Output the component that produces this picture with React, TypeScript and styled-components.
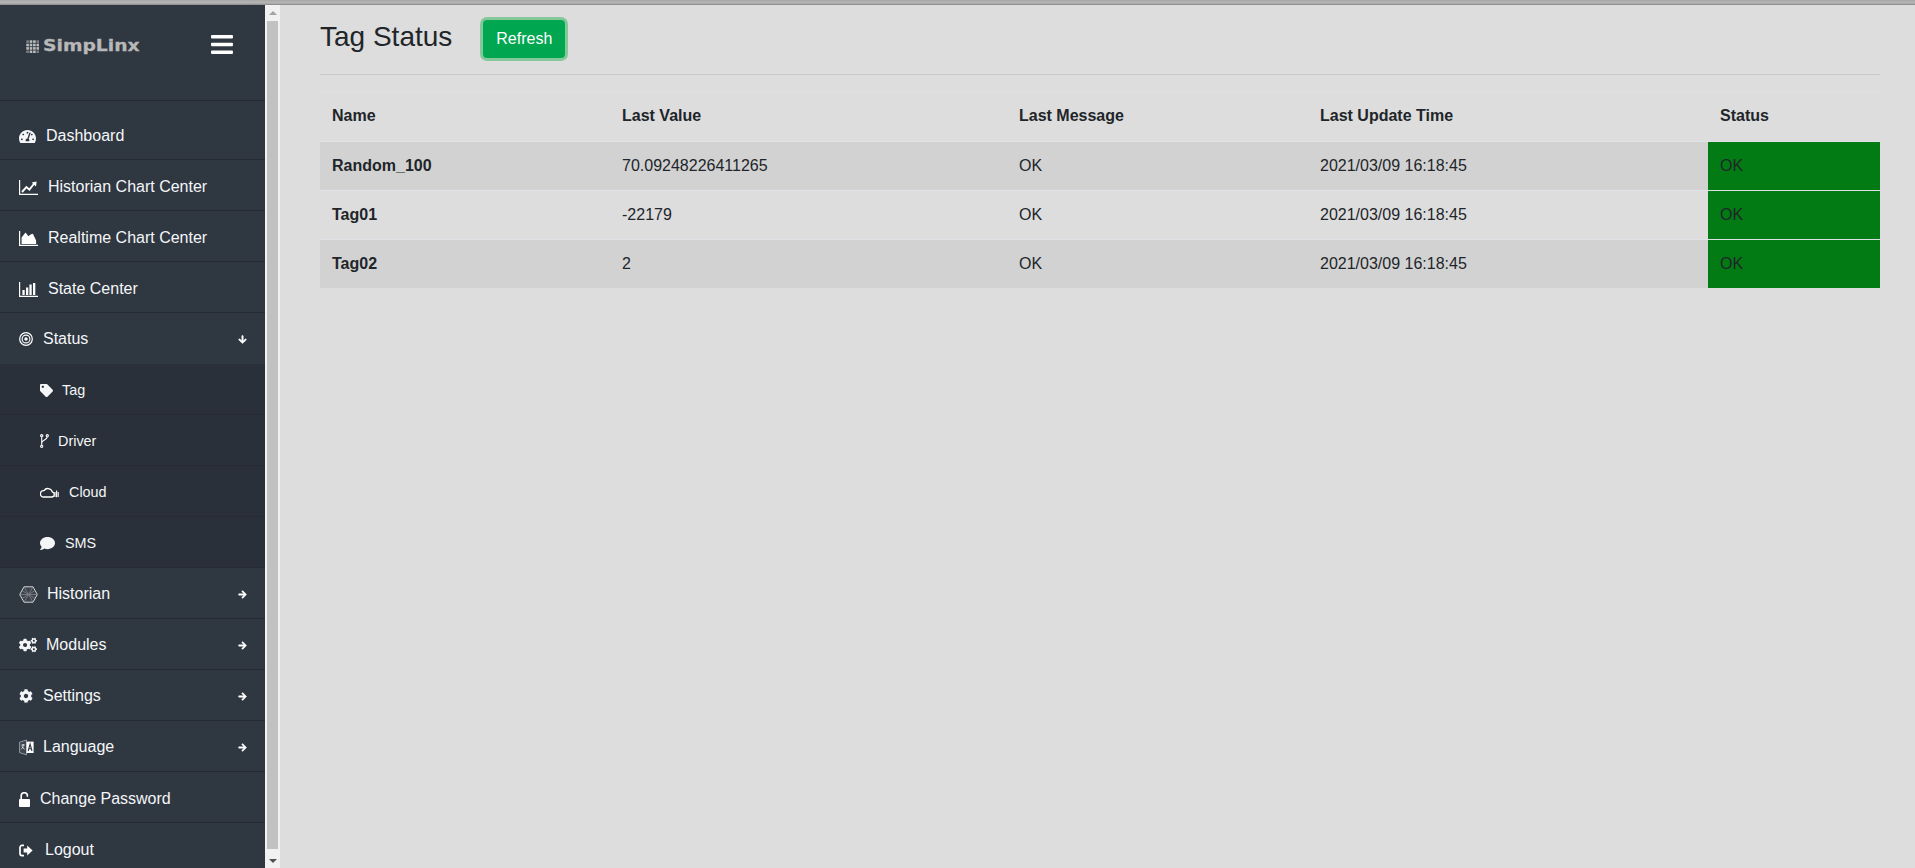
import React from "react";
import styled, { createGlobalStyle } from "styled-components";
import { FaTachometerAlt, FaTag, FaComment, FaCogs, FaCog, FaArrowRight, FaArrowDown, FaBars } from "react-icons/fa";

const Global = createGlobalStyle`
  html, body { margin: 0; height: 100%; overflow: hidden; background: #ddd; }
  body { font-family: "Liberation Sans", Arial, sans-serif; font-size: 16px; color: #212529; }
  #root { height: 100%; }
`;

const Page = styled.div`display: flex; flex-direction: column; height: 868px; width: 1915px;`;
const TopStrip = styled.div`height: 5px; flex: none; background: linear-gradient(#a6a6a6, #b6b6b6 45%, #a8a8a8 75%, #828282);`;
const Body = styled.div`display: flex; flex: 1; min-height: 0;`;
const Sidebar = styled.aside`width: 265px; flex: none; background: #2f3741; overflow: hidden; color: #fff;`;
const ScrollBar = styled.div`
  width: 15px; flex: none; background: #f1f1f1; display: flex; flex-direction: column; align-items: center; box-sizing: border-box;
`;
const ScrollButton = styled.div`height: 15px; flex: none; display: flex; align-items: center; justify-content: center;`;
const ScrollThumb = styled.div`flex: 1; width: 11px; background: #c1c1c1; margin: 1px 0 4px;`;
const TriUp = styled.div`width: 0; height: 0; border: 4px solid transparent; border-top: 0; border-bottom: 4px solid #a3a3a3;`;
const TriDown = styled.div`width: 0; height: 0; border: 4px solid transparent; border-bottom: 0; border-top: 4px solid #505050;`;

const Brand = styled.div`
  height: 96px; border-bottom: 1px solid #262b31; box-sizing: border-box; display: flex; align-items: flex-start;
  justify-content: space-between; padding: 31px 32px 0 26px; margin-bottom: 8px;
`;
const Logo = styled.div`display: flex; align-items: center; gap: 4px; height: 18px; margin-top: 1px;`;
const LogoText = styled.span`
  font-family: "DejaVu Sans", sans-serif; font-weight: 700; font-size: 16px; color: #b8b8b8; line-height: 18px;
  display: inline-block; transform: scaleX(1.17); transform-origin: left center; -webkit-text-stroke: 0.3px #b8b8b8;
`;
const Burger = styled(FaBars)`width: 22px; height: 25px; color: #fff; margin-top: -4px;`;
const Row = styled.div<{ $sub?: boolean; $open?: boolean; $drop: number }>`
  height: 51px; box-sizing: border-box; display: flex; align-items: center; font-size: ${(p) => (p.$sub ? "14.4px" : "16px")};
  padding: ${(p) => p.$drop}px 18px 0 ${(p) => (p.$sub ? "40px" : "19px")}; color: #f4f6f8;
  border-bottom: 1px solid ${(p) => (p.$sub ? "#272c33" : p.$open ? "transparent" : "#262b31")};
  background: ${(p) => (p.$sub ? "#2a3039" : "#2f3741")};
`;
const IconSlot = styled.span<{ $w: number }>`
  display: inline-flex; align-items: center; flex: none; width: ${(p) => p.$w}px; svg { display: block; }
`;
const Label = styled.span`flex: 1; white-space: nowrap;`;
const Arrow = styled.span`display: inline-flex; color: #fff; svg { width: 9px; height: 9px; display: block; stroke: currentColor; stroke-width: 30; }`;

const Dots = () => (
  <svg width="13" height="13" viewBox="0 0 13 13" aria-hidden="true">
    {[0, 1, 2, 3].flatMap((r) =>
      [0, 1, 2, 3].map((c) => {
        const corner = (r === 0 || r === 3) && (c === 0 || c === 3);
        return <rect key={`${r}-${c}`} x={c * 3.4 + 0.3} y={r * 3.4 + 0.3} width="2.6" height="2.6" fill={corner ? "#7c8084" : "#bcbcbc"} />;
      })
    )}
  </svg>
);

const HexIcon = () => (
  <svg width="19" height="17" viewBox="0 0 19 17" fill="none" stroke="#d4d7da" strokeWidth="1" aria-hidden="true">
    <path d="M5 .8h9l4.3 7.7L14 16.2H5L.7 8.5z" fill="#3d444d" />
    <path d="M5 .8l9 15.4M14 .8L5 16.2M.7 8.5h17.6M3 4.5l13 8M16 4.5l-13 8" stroke="#80848a" strokeWidth="0.8" />
  </svg>
);
const Axis = () => <path d="M.6 0v14.4H19" fill="none" stroke="#fff" strokeWidth="1.2" />;
const LineChartIcon = () => (
  <svg width="19" height="15" viewBox="0 0 19 15" aria-hidden="true">
    <Axis />
    <path d="M3 12l4.4-5 3 2.6 4.4-5.6" fill="none" stroke="#fff" strokeWidth="1.9" />
    <path d="M12.6 2.4l5-1-.6 5z" fill="#fff" />
  </svg>
);
const AreaChartIcon = () => (
  <svg width="19" height="15" viewBox="0 0 19 15" aria-hidden="true">
    <Axis />
    <path d="M2.6 13V6.5L6.5 1.5l3 3.7 2-1.8 2.4-.6 3.2 6.7V13z" fill="#fff" />
  </svg>
);
const BarChartIcon = () => (
  <svg width="19" height="15" viewBox="0 0 19 15" aria-hidden="true">
    <Axis />
    <path d="M3.4 8h2.3v5H3.4zM7 5.5h2.3V13H7zM10.4 2.6h2.3V13h-2.3zM14 1h2.3v12H14z" fill="#fff" />
  </svg>
);
const TargetIcon = () => (
  <svg width="14" height="14" viewBox="0 0 14 14" fill="none" stroke="#fff" aria-hidden="true">
    <circle cx="7" cy="7" r="6.3" strokeWidth="1.2" />
    <circle cx="7" cy="7" r="3.9" strokeWidth="1.1" />
    <circle cx="7" cy="7" r="1.7" fill="#fff" stroke="none" />
  </svg>
);
const ForkIcon = () => (
  <svg width="9" height="14" viewBox="0 0 9 14" fill="none" stroke="#fff" strokeWidth="1.1" aria-hidden="true">
    <circle cx="1.7" cy="1.7" r="1.1" />
    <circle cx="1.7" cy="12.3" r="1.1" />
    <circle cx="7.3" cy="1.7" r="1.1" />
    <path d="M1.7 2.8v8.4M7.3 2.8C7.3 6 1.7 6 1.7 9" />
  </svg>
);
const CloudIcon = () => (
  <svg width="19" height="12" viewBox="0 0 19 12" fill="none" stroke="#fff" strokeWidth="1.3" aria-hidden="true">
    <path d="M3.2 11h8.8a2.6 2.6 0 00.3-5.1A4.6 4.6 0 004 4.6 3.2 3.2 0 003.2 11z" />
    <path d="M15 6v5M16.6 4.6v6.6M18.2 6v5" strokeWidth="1.1" />
  </svg>
);
const LanguageIcon = () => (
  <svg width="15" height="17" viewBox="0 0 15 17" aria-hidden="true">
    <path d="M.6 3.2L7.5 1v14.8L.6 13.6z" fill="#3c4650" stroke="#aab4be" strokeWidth="0.8" />
    <path d="M7.5 2.6H14.6V14H7.5z" fill="#fff" />
    <path d="M9.2 12l1.9-7 1.9 7M10 9.8h2.2" fill="none" stroke="#2f3741" strokeWidth="1.1" />
    <path d="M2.4 6h3.4M4.1 5v1c0 2-.8 3.5-1.7 4M3.2 7.5c.5 1.2 1.3 2.2 2.4 2.7" fill="none" stroke="#fff" strokeWidth="0.8" />
  </svg>
);
const UnlockIcon = () => (
  <svg width="11" height="15" viewBox="0 0 11 15" aria-hidden="true">
    <rect x="0" y="7" width="11" height="8" rx="0.8" fill="#fff" />
    <path d="M2.2 7.5V3.8a3.1 3.1 0 016.2 0v.9" fill="none" stroke="#fff" strokeWidth="1.6" />
  </svg>
);
const LogoutIcon = () => (
  <svg width="14" height="13" viewBox="0 0 14 13" aria-hidden="true">
    <path d="M5 1.4H3A2 2 0 001 3.4v6.2a2 2 0 002 2h2" fill="none" stroke="#fff" strokeWidth="1.7" />
    <path d="M4.6 4.6h3.6V1.4l5.4 5.1-5.4 5.1V8.4H4.6z" fill="#fff" />
  </svg>
);

type Item = { label: string; icon: React.ReactNode; w: number; sub?: boolean; arrow?: "r" | "d" };
const items: Item[] = [
  { label: "Dashboard", icon: <FaTachometerAlt size={17} />, w: 27 },
  { label: "Historian Chart Center", icon: <LineChartIcon />, w: 29 },
  { label: "Realtime Chart Center", icon: <AreaChartIcon />, w: 29 },
  { label: "State Center", icon: <BarChartIcon />, w: 29 },
  { label: "Status", icon: <TargetIcon />, w: 24, arrow: "d" },
  { label: "Tag", icon: <FaTag size={13} />, w: 22, sub: true },
  { label: "Driver", icon: <ForkIcon />, w: 18, sub: true },
  { label: "Cloud", icon: <CloudIcon />, w: 29, sub: true },
  { label: "SMS", icon: <FaComment size={15} />, w: 25, sub: true },
  { label: "Historian", icon: <HexIcon />, w: 28, arrow: "r" },
  { label: "Modules", icon: <FaCogs size={18} />, w: 27, arrow: "r" },
  { label: "Settings", icon: <FaCog size={14} />, w: 24, arrow: "r" },
  { label: "Language", icon: <LanguageIcon />, w: 24, arrow: "r" },
  { label: "Change Password", icon: <UnlockIcon />, w: 21 },
  { label: "Logout", icon: <LogoutIcon />, w: 26 },
];

const Main = styled.main`flex: 1; min-width: 0; padding: 0 35px 0 40px; background: #ddd;`;
const Head = styled.div`
  display: flex; align-items: center; height: 70px; box-sizing: border-box; border-bottom: 1px solid #c8c8c8; padding-bottom: 4px;
  margin-bottom: 16px;
`;
const Title = styled.h1`font-size: 28px; font-weight: 400; margin: 0 30px 2px 0; line-height: 1.2; color: #212529;`;
const RefreshButton = styled.button`
  height: 38px; width: 82px; border: 0; border-radius: 4px; background: #00a650; color: #fff; font: inherit;
  box-shadow: 0 0 0 3px #85c99a; padding: 0; margin: 3px 0 0 1px;
`;
const Table = styled.table`width: 1560px; border-collapse: collapse; table-layout: fixed; font-size: 16px;`;
const Th = styled.th`
  text-align: left; font-weight: 700; padding: 0 12px 1px; height: 50px; border-top: 1px solid #e0e0e0; box-sizing: border-box;
`;
const Tr = styled.tr<{ $odd: boolean }>`background: ${(p) => (p.$odd ? "#d2d2d2" : "transparent")};`;
const Td = styled.td<{ $bold?: boolean }>`
  padding: 0 12px; height: 49px; font-weight: ${(p) => (p.$bold ? 700 : 400)}; border-top: 1px solid #dee2e6; box-sizing: border-box;
  tr:last-child > & { height: 48px; }
`;
const StatusCell = styled(Td)`background: #027b14;`;

const rows = [
  ["Random_100", "70.09248226411265"],
  ["Tag01", "-22179"],
  ["Tag02", "2"],
];

export default function App() {
  return (
    <Page>
      <Global />
      <TopStrip />
      <Body>
        <Sidebar>
          <Brand>
            <Logo><Dots /><LogoText>SimpLinx</LogoText></Logo>
            <Burger />
          </Brand>
          {items.map((it) => (
            <Row key={it.label} $sub={it.sub} $open={it.arrow === "d"} $drop={it.sub || it.arrow ? 2 : 4}>
              <IconSlot $w={it.w}>{it.icon}</IconSlot>
              <Label>{it.label}</Label>
              {it.arrow && <Arrow>{it.arrow === "r" ? <FaArrowRight /> : <FaArrowDown />}</Arrow>}
            </Row>
          ))}
        </Sidebar>
        <ScrollBar>
          <ScrollButton><TriUp /></ScrollButton>
          <ScrollThumb />
          <ScrollButton><TriDown /></ScrollButton>
        </ScrollBar>
        <Main>
          <Head>
            <Title>Tag Status</Title>
            <RefreshButton>Refresh</RefreshButton>
          </Head>
          <Table>
            <colgroup>
              <col width="290" /><col width="397" /><col width="301" /><col width="400" /><col width="172" />
            </colgroup>
            <thead>
              <tr><Th>Name</Th><Th>Last Value</Th><Th>Last Message</Th><Th>Last Update Time</Th><Th>Status</Th></tr>
            </thead>
            <tbody>
              {rows.map((r, i) => (
                <Tr key={r[0]} $odd={i % 2 === 0}>
                  <Td $bold>{r[0]}</Td>
                  <Td>{r[1]}</Td>
                  <Td>OK</Td>
                  <Td>2021/03/09 16:18:45</Td>
                  <StatusCell>OK</StatusCell>
                </Tr>
              ))}
            </tbody>
          </Table>
        </Main>
      </Body>
    </Page>
  );
}
